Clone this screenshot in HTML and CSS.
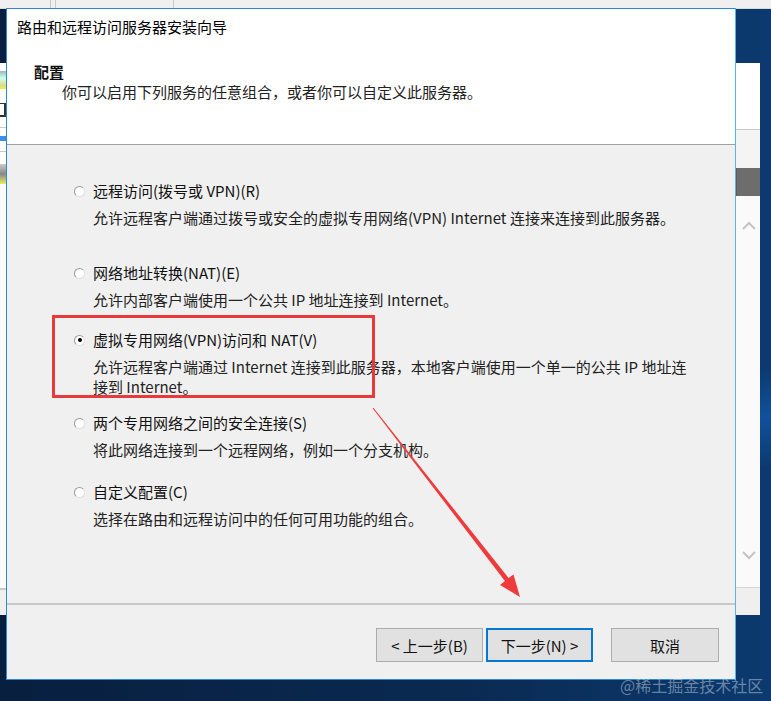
FILE: index.html
```html
<!DOCTYPE html>
<html lang="zh-CN">
<head>
<meta charset="utf-8">
<title>路由和远程访问服务器安装向导</title>
<link rel="stylesheet" href="styles.css">
</head>
<body>
<div class="desktop">
  <div class="topstrip"><span class="ts-line l1"></span><span class="ts-line l2"></span><span class="ts-line l3"></span></div>
  <div class="bgwin">
    <div class="bgwin-left">
      <div class="bl-icon"></div>
      <div class="bl-mark"></div>
      <div class="bl-sep"></div>
      <div class="bl-blue"></div>
      <div class="bl-sep"></div>
      <div class="bl-icon2"></div>
      <div class="bl-fill"></div>
      <div class="bl-bottom"></div>
    </div>
    <div class="scroll">
      <div class="sc-top"></div>
      <div class="sc-band"></div>
      <div class="sc-thumb"></div>
      <div class="sc-track">
        <svg class="chev" width="14" height="9" viewBox="0 0 14 9"><path d="M1 8 L7 2 L13 8" fill="none" stroke="#c4c4c4" stroke-width="2"/></svg>
        <svg class="chev" width="14" height="9" viewBox="0 0 14 9"><path d="M1 1 L7 7 L13 1" fill="none" stroke="#c4c4c4" stroke-width="2"/></svg>
      </div>
      <div class="sc-bottom"></div>
    </div>
  </div>

  <div class="dialog">
    <div class="header">
      <div class="wtitle">路由和远程访问服务器安装向导</div>
      <div class="h-title">配置</div>
      <div class="h-sub">你可以启用下列服务的任意组合，或者你可以自定义此服务器。</div>
    </div>
    <div class="body">
      <div class="opt opt1">
        <div class="opt-title"><span class="radio"></span>远程访问(拨号或 VPN)(R)</div>
        <div class="opt-desc">允许远程客户端通过拨号或安全的虚拟专用网络(VPN) Internet 连接来连接到此服务器。</div>
      </div>
      <div class="opt opt2">
        <div class="opt-title"><span class="radio"></span>网络地址转换(NAT)(E)</div>
        <div class="opt-desc">允许内部客户端使用一个公共 IP 地址连接到 Internet。</div>
      </div>
      <div class="opt opt3">
        <div class="opt-title"><span class="radio checked"></span>虚拟专用网络(VPN)访问和 NAT(V)</div>
        <div class="opt-desc">允许远程客户端通过 Internet 连接到此服务器，本地客户端使用一个单一的公共 IP 地址连<br>接到 Internet。</div>
      </div>
      <div class="opt opt4">
        <div class="opt-title"><span class="radio"></span>两个专用网络之间的安全连接(S)</div>
        <div class="opt-desc">将此网络连接到一个远程网络，例如一个分支机构。</div>
      </div>
      <div class="opt opt5">
        <div class="opt-title"><span class="radio"></span>自定义配置(C)</div>
        <div class="opt-desc">选择在路由和远程访问中的任何可用功能的组合。</div>
      </div>
    </div>
    <div class="footer">
      <button class="btn">&lt; 上一步(B)</button>
      <button class="btn btn-default">下一步(N) &gt;</button>
      <button class="btn btn-cancel">取消</button>
    </div>
  </div>

  <div class="redbox"></div>
  <svg class="arrow" width="771" height="701" viewBox="0 0 771 701">
    <polygon points="372.6,408.3 373.4,407.7 508.6,578 513.5,574.5 520,597 500,585 504.9,581" fill="#ee3b3b"/>
  </svg>
  <div class="watermark">@稀土掘金技术社区</div>
</div>
</body>
</html>
```

FILE: styles.css
```css
* { box-sizing: border-box; }
html, body { margin: 0; padding: 0; }
body {
  width: 771px;
  height: 701px;
  overflow: hidden;
  font-family: "Noto Sans CJK SC", "Microsoft YaHei", sans-serif;
}
.desktop {
  position: relative;
  width: 771px;
  height: 701px;
  background:
    linear-gradient(170deg, rgba(0,0,0,0) 60%, rgba(20,100,190,0.55) 66%, rgba(0,0,0,0) 72%),
    linear-gradient(90deg, #081f3f 0%, #0a2a52 60%, #0b3a70 100%);
  overflow: hidden;
}
.topstrip {
  position: absolute;
  left: 0; top: 0;
  width: 771px; height: 9px;
  background: #f0f0f0;
  border-bottom: 1px solid #d9d9d9;
}
.ts-line { position: absolute; top: 0; width: 1px; height: 8px; background: #c8c8c8; }
.ts-line.l1 { left: 50px; }
.ts-line.l2 { left: 55px; }
.ts-line.l3 { left: 173px; }

.bgwin {
  position: absolute;
  left: 0; top: 63px;
  width: 760px; height: 552px;
  display: flex;
  justify-content: space-between;
}
.bgwin-left {
  width: 7px;
  background: #ffffff;
  display: flex;
  flex-direction: column;
}
.bl-icon { height: 18px; margin-top: 8px; background: linear-gradient(#9bb 0, #cfe 40%, #dd8 80%, #ee4 100%); }
.bl-mark { height: 14px; margin-top: 14px; margin-right: 1px; border: 2px solid #333; border-left: none; border-top-width: 1px; }
.bl-sep { height: 1px; margin-top: 10px; background: #c8c8c8; }
.bl-blue { height: 5px; margin-top: 8px; background: #3a8ee6; }
.bl-icon2 { height: 20px; margin-top: 12px; background: linear-gradient(#ccc 0, #888 50%, #ee6 100%); }
.bl-fill { flex: 1; background: #fbfbfb; }
.bl-bottom { height: 27px; border-top: 2px solid #c8c8c8; background: #f0f0f0; }

.scroll {
  width: 24px;
  display: flex;
  flex-direction: column;
  background: #fcfcfc;
}
.sc-top { height: 67px; background: #ffffff; border-bottom: 1px solid #c8c8c8; }
.sc-band { height: 38px; background: #f4f4f4; }
.sc-thumb { height: 28px; background: #6d6d6d; border-left: 1px solid #5c5c5c; }
.sc-track {
  flex: 1;
  display: flex;
  flex-direction: column;
  justify-content: space-between;
  align-items: center;
  padding: 25px 0 27px 2px;
  background: #fafafa;
}
.chev { display: block; }
.sc-bottom { height: 28px; background: #efefef; border-top: 1px solid #d6d6d6; }

.dialog {
  position: absolute;
  left: 6px; top: 8px;
  width: 730px; height: 672px;
  border: 1px solid #2b8ad8;
  border-right-color: #55b5ee;
  background: #f0f0f0;
  display: flex;
  flex-direction: column;
  font-size: 15px;
}
.header {
  height: 136px;
  background: #ffffff;
  border-bottom: 1px solid #a0a0a0;
  padding: 8px 0 0 10px;
  color: #000;
}
.wtitle { line-height: 20px; }
.h-title { margin-top: 25px; padding-left: 17px; line-height: 20px; font-weight: bold; color: #111; }
.h-sub { padding-left: 45px; line-height: 20px; color: #222; }

.body {
  flex: 1;
  padding: 36px 0 0 67px;
  color: #111;
}
.opt-title {
  display: flex;
  align-items: center;
  line-height: 20px;
}
.opt-desc {
  margin-top: 7px;
  padding-left: 19px;
  line-height: 20px;
  color: #222;
}
.opt2 { margin-top: 35px; }
.opt3 { margin-top: 20px; }
.opt4 { margin-top: 16px; }
.opt5 { margin-top: 22px; }
.radio {
  width: 11px; height: 11px;
  margin-right: 8px;
  border-radius: 50%;
  background: #fff;
  border: 1px solid #9a9a9a;
  border-right-color: #e0e0e0;
  border-bottom-color: #e0e0e0;
  position: relative;
  flex: none;
}
.radio.checked::after {
  content: "";
  position: absolute;
  left: 2.5px; top: 2.5px;
  width: 4px; height: 4px;
  border-radius: 50%;
  background: #000;
}

.footer {
  height: 76px;
  border-top: 2px solid #c8c8c8;
  display: flex;
  justify-content: flex-end;
  align-items: flex-start;
  padding: 23px 16px 0 0;
}
.btn {
  width: 107px; height: 34px;
  background: #e1e1e1;
  border: 1px solid #adadad;
  font-family: inherit;
  font-size: 15px;
  color: #111;
  padding: 0;
}
.btn-default {
  margin-left: 3px;
  border: 2px solid #0078d7;
}
.btn-cancel {
  margin-left: 18px;
  width: 108px;
}

.redbox {
  position: absolute;
  left: 52px; top: 315px;
  width: 323px; height: 83px;
  border: 3px solid #e83a3a;
}
.arrow {
  position: absolute;
  left: 0; top: 0;
}
.watermark {
  position: absolute;
  left: 620px; top: 674px;
  font-size: 16px;
  line-height: 22px;
  color: rgba(190, 200, 215, 0.55);
  font-family: "Noto Sans CJK SC", serif;
}
```
